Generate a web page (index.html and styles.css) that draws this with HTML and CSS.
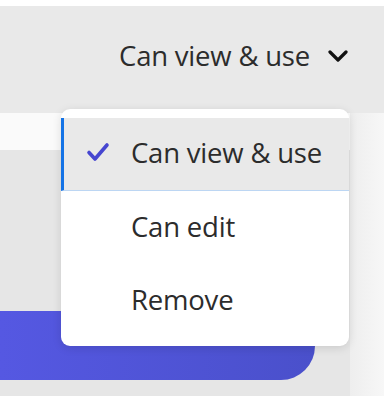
FILE: index.html
```html
<!DOCTYPE html>
<html lang="en">
<head>
  <meta charset="UTF-8" />
  <meta name="viewport" content="width=device-width, initial-scale=1" />
  <title>Share permissions</title>
  <link rel="stylesheet" href="styles.css">
</head>
<body>
  <div class="topbar">
    <button class="perm-toggle">
      <span>Can view &amp; use</span>
      <svg class="chevron" width="20" height="12" viewBox="0 0 20 12">
        <path d="M2 2 L10 10 L18 2" fill="none" stroke="#111" stroke-width="3.2" stroke-linecap="round" stroke-linejoin="round"/>
      </svg>
    </button>
  </div>

  <div class="content">
    <div class="main">
      <div class="strip"></div>
      <div class="panel">
        <div class="cta"></div>
      </div>
    </div>
    <div class="side"></div>
  </div>

  <ul class="menu">
    <li class="menu-item selected">
      <svg class="check" width="24" height="22" viewBox="0 0 24 22">
        <path d="M3 11.5 L9 18 L21 4" fill="none" stroke="#4646d0" stroke-width="3.6" stroke-linecap="round" stroke-linejoin="round"/>
      </svg>
      <span>Can view &amp; use</span>
    </li>
    <li class="menu-item"><span>Can edit</span></li>
    <li class="menu-item"><span>Remove</span></li>
  </ul>
</body>
</html>
```

FILE: styles.css
```css
body {
  margin: 0;
  background: #fff;
  font-family: 'Open Sans', sans-serif;
  color: #2c2c2c;
  position: relative;
  height: 396px;
  overflow: hidden;
}
.topbar {
  margin-top: 6px;
  height: 107px;
  background: #e9e9e9;
  display: flex;
  justify-content: flex-end;
  align-items: flex-start;
}
.perm-toggle {
  display: flex;
  align-items: center;
  gap: 18px;
  margin-top: 31px;
  margin-right: 36px;
  padding: 0;
  border: none;
  background: none;
  font: inherit;
  font-size: 27.5px;
  letter-spacing: -0.2px;
  color: #2c2c2c;
}

.content {
  display: flex;
  height: 283px;
}
.main {
  width: 350px;
  display: flex;
  flex-direction: column;
}
.strip {
  height: 37px;
  background: #fafafa;
}
.panel {
  flex: 1;
  background: #e6e6e6;
  padding-top: 161px;
}
.cta {
  width: 315px;
  height: 69px;
  background: linear-gradient(90deg, #5558e2, #4a50cb);
  border-bottom-right-radius: 34px;
}
.side {
  flex: 1;
  background: linear-gradient(90deg, #eeeeee, #f7f7f7);
}

/* dropdown */
.menu {
  position: absolute;
  left: 61px;
  top: 109px;
  width: 288px;
  height: 228px;
  margin: 0;
  padding: 9px 0 0;
  list-style: none;
  background: #fff;
  border-radius: 9px;
  box-shadow: 0 2px 10px rgba(0, 0, 0, 0.12);
}
.menu-item {
  height: 70px;
  padding-bottom: 3px;
  display: flex;
  align-items: center;
  padding-left: 70px;
  font-size: 27.5px;
  letter-spacing: -0.2px;
  color: #2c2c2c;
  position: relative;
}
.menu-item.selected {
  height: 69px;
  padding-left: 67px;
  background: #e9e9e9;
  border-left: 3px solid #1473e6;
  border-bottom: 1px solid #bcd6f3;
}
.check {
  position: absolute;
  left: 22px;
  top: 23px;
}
```
